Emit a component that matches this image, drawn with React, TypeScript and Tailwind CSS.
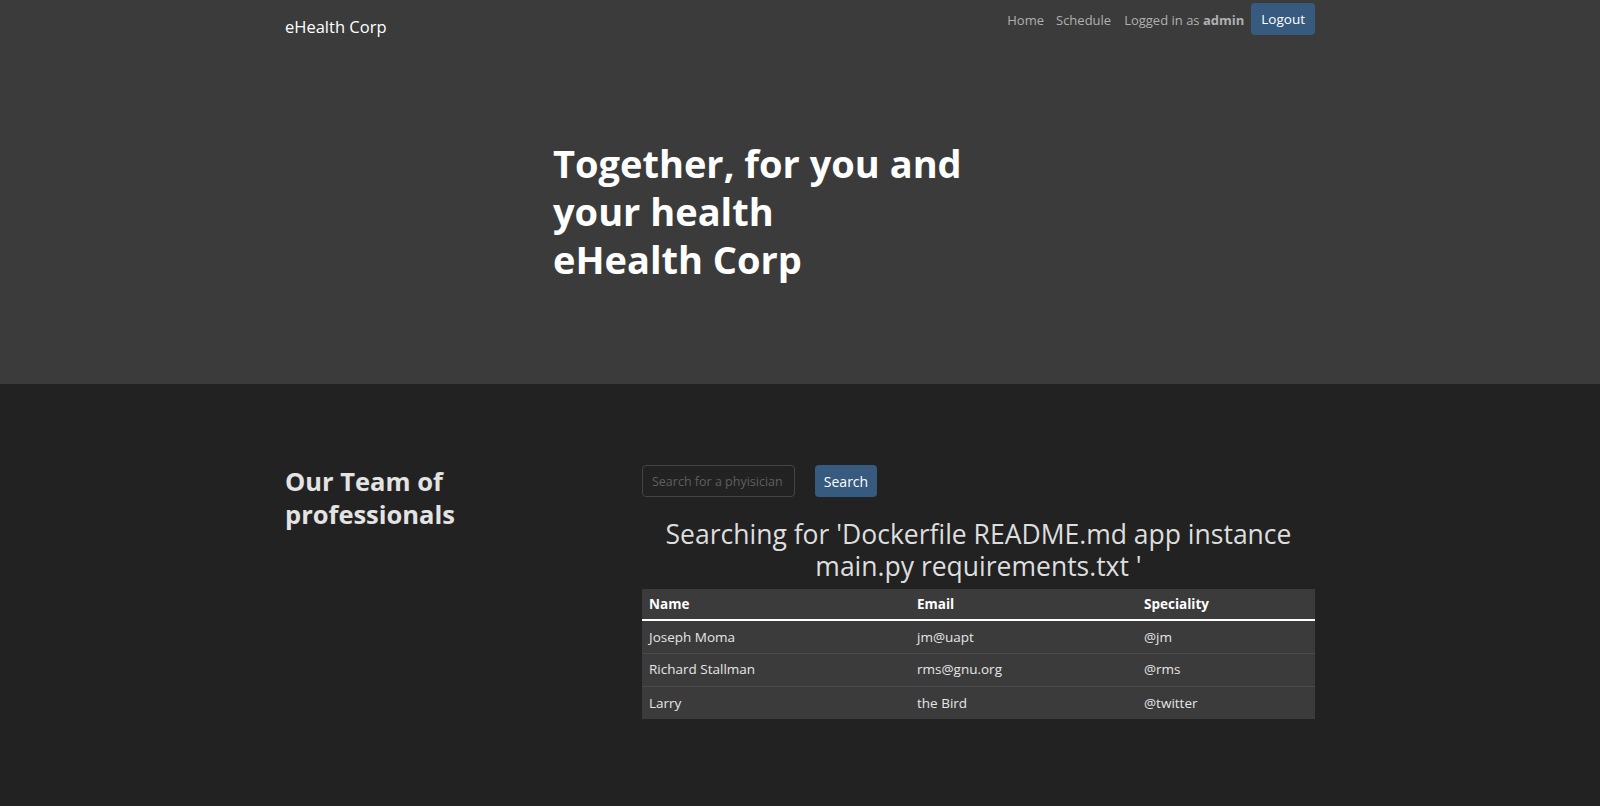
import React from "react";

const rows = [
    { name: "Joseph Moma", email: "jm@uapt", handle: "@jm" },
    { name: "Richard Stallman", email: "rms@gnu.org", handle: "@rms" },
    { name: "Larry", email: "the Bird", handle: "@twitter" },
];

export default function App() {
    return (
        <div className="min-h-screen bg-[#222222] font-['Open_Sans',sans-serif]">
            <div className="h-[384px] bg-[#3b3b3b]">
                <nav className="mx-auto flex w-[1030px] items-start justify-between">
                    <a href="#" className="mt-[15px] text-[16.5px] text-white">
                        eHealth Corp
                    </a>
                    <div className="mt-[3px] flex items-center text-[13px] text-[#b0b0b0]">
                        <a href="#" className="px-[6px] pt-[3px]">
                            Home
                        </a>
                        <a href="#" className="px-[6px] pt-[3px]">
                            Schedule
                        </a>
                        <span className="px-[7px] pt-[3px]">
                            Logged in as <b className="font-bold">admin</b>
                        </span>
                        <button className="h-[32px] rounded-[4px] bg-[#375a7f] px-[10px] text-[13.5px] text-white">
                            Logout
                        </button>
                    </div>
                </nav>

                <div className="mx-auto w-[1030px] pt-[99px] pl-[268px]">
                    <h1 className="text-[38px] font-bold leading-[48px] text-white">
                        Together, for you and
                        <br />
                        your health
                        <br />
                        eHealth Corp
                    </h1>
                </div>
            </div>

            <section className="mx-auto grid w-[1030px] grid-cols-[357px_1fr] pt-[81px] pb-20">
                <h3 className="text-[25.5px] font-bold leading-[33px] text-[#e3e3e3]">
                    Our Team of
                    <br />
                    professionals
                </h3>

                <div>
                    <div className="flex gap-[20px]">
                        <input
                            placeholder="Search for a phyisician"
                            className="h-[32px] w-[153px] rounded-[4px] border border-[#444] bg-transparent px-[9px] text-[12.5px] text-white placeholder:text-[#5f5f5f] outline-none"
                        />
                        <button className="h-[32px] w-[62px] rounded-[4px] bg-[#375a7f] text-[14px] text-white">
                            Search
                        </button>
                    </div>

                    <h3 className="mt-[21px] mb-[7px] text-center text-[26.5px] leading-[32px] text-[#dedede]">
                        Searching for 'Dockerfile README.md app instance main.py requirements.txt '
                    </h3>

                    <table className="w-full bg-[#3b3b3b] text-left text-[13.5px]">
                        <thead>
                            <tr className="border-b-2 border-white text-white">
                                <th className="h-[31px] w-[268px] px-[7px] font-bold">Name</th>
                                <th className="w-[227px] px-[7px] font-bold">Email</th>
                                <th className="px-[7px] font-bold">Speciality</th>
                            </tr>
                        </thead>
                        <tbody className="text-[#e6e6e6]">
                            {rows.map((r, i) => (
                                <tr
                                    key={r.name}
                                    className={i < rows.length - 1 ? "border-b border-[#4a4a4a]" : ""}
                                >
                                    <td className="h-[33px] px-[7px]">{r.name}</td>
                                    <td className="px-[7px]">{r.email}</td>
                                    <td className="px-[7px]">{r.handle}</td>
                                </tr>
                            ))}
                        </tbody>
                    </table>
                </div>
            </section>
        </div>
    );
}
